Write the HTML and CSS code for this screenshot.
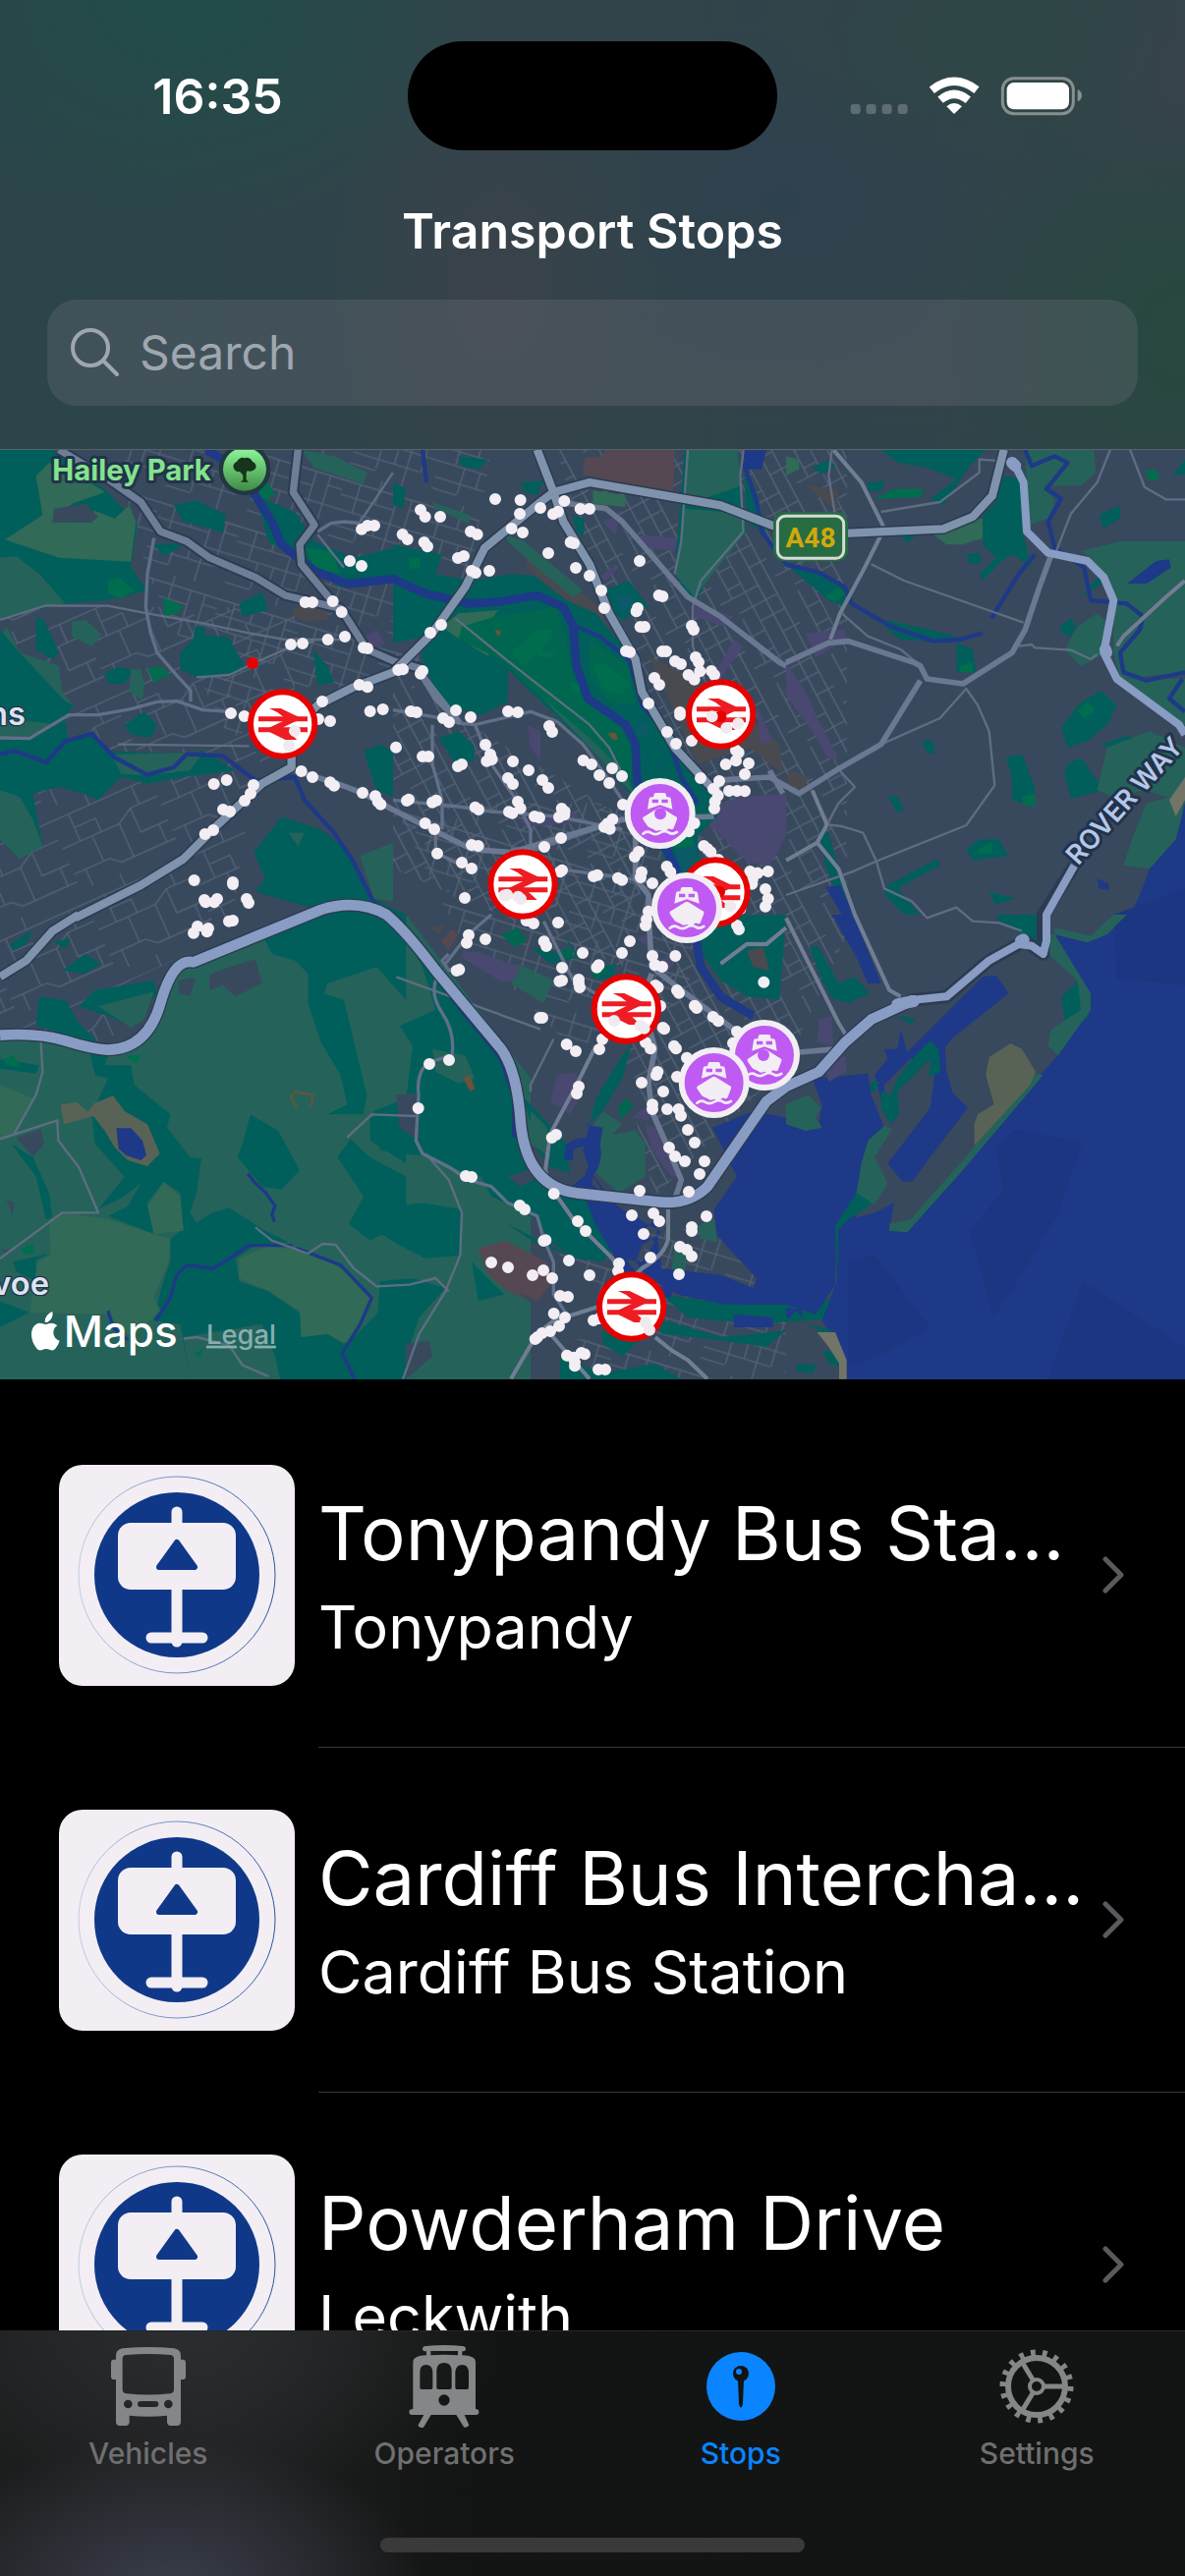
FILE: index.html
```
<!DOCTYPE html>
<html lang="en">
<head>
<meta charset="utf-8">
<meta name="viewport" content="width=device-width">
<title>Transport Stops</title>
<link rel="stylesheet" href="styles.css">
</head>
<body>
<div class="app">
<header class="header">
  <div class="status">
    <div class="status-time">16:35</div>
    <div class="island"></div>
    <svg class="status-icons" viewBox="0 0 720 120" aria-hidden="true">
      <g class="dim"><rect x="2" y="84" width="30" height="30" rx="9"/><rect x="50" y="84" width="30" height="30" rx="9"/><rect x="98" y="84" width="30" height="30" rx="9"/><rect x="146" y="84" width="30" height="30" rx="9"/></g>
      <g class="wifi"><path d="M250 41Q318-12 387 41"/><path d="M276 71Q318 36 361 71"/></g>
      <path class="white" d="M318 114L295 91Q318 71 342 91Z"/>
      <rect class="battery" x="466" y="5" width="216" height="108" rx="34"/>
      <rect class="white" x="479" y="18" width="190" height="82" rx="22"/>
      <path class="nub" d="M695 40Q708 44 708 58T695 76Z"/>
    </svg>
  </div>
  <h1 class="title">Transport Stops</h1>
  <label class="search">
    <svg class="search-icon" viewBox="0 0 50 50" aria-hidden="true"><circle cx="20" cy="20" r="18"/><path d="M33 33L47 47"/></svg>
    <input class="search-input" type="search" placeholder="Search" aria-label="Search">
  </label>
</header>

<section class="map" aria-label="Map of stops">
<svg class="map-art" viewBox="0 21 3618 2837" preserveAspectRatio="xMidYMid slice">
  <defs>
    <pattern id="st1" width="330" height="270" patternUnits="userSpaceOnUse" patternTransform="rotate(-24)">
      <path class="lane" d="M0 40H330M0 130H190L240 100H330M0 215H120L150 240H330M60 40V130M130 0V40M190 130V240M270 40V100M240 100V180H330M40 215V270M100 130V215M300 180V240M60 85H130V130"/>
    </pattern>
    <pattern id="st2" width="260" height="230" patternUnits="userSpaceOnUse" patternTransform="rotate(17)">
      <path class="lane" d="M0 30H260M0 75H170M0 120H260M0 170H210M50 30V120M110 0V75M170 30V230M215 30V170M80 120V200M0 205H80M260 60H215M130 120V170"/>
    </pattern>
    <pattern id="st3" width="220" height="190" patternUnits="userSpaceOnUse" patternTransform="rotate(62)">
      <path class="lane" d="M0 20H220M0 60H220M0 105H220M0 150H150M30 20V105M90 0V60M150 60V190M200 20V150M60 105V150M120 105V150"/>
    </pattern>
    <linearGradient id="parkfill" x1="0" y1="0" x2="0" y2="1"><stop offset="0" stop-color="#8dfa98"/><stop offset="1" stop-color="#3f8a46"/></linearGradient>
    <g id="rail">
      <circle r="98" class="rail-disc"/>
      <path class="rail-mark" d="M-74-16H76M-74 17H76"/>
      <path class="rail-arrow" d="M-41-48H-6L58-17L2 10L44 48H8L-54 17L12-14L-16-36Z"/>
    </g>
    <g id="ferry">
      <circle r="99" class="ferry-disc"/>
      <path class="ferry-mark" fill-rule="evenodd" d="M-38-13L-33-46Q-31-50-24-50H-20L-18-59Q-17-63-12-63H12Q17-63 18-59L20-50H24Q31-50 33-46L38-13L4-25Q0-27-4-25ZM-24-43V-32H-5V-43ZM5-43V-32H24V-43Z"/>
      <path class="ferry-mark" d="M-52 18Q-54 11-46 8L-5-17Q0-20 5-17L46 8Q54 11 52 18L42 44Q38 52 28 46L16 53Q8 56 0 50Q-12 57-20 48Q-30 45-37 40Z"/>
      <path class="ferry-wave" d="M-52 62Q-40 52-28 59Q-14 68 0 59Q14 50 28 59Q38 66 52 57"/>
    </g>
  </defs>

  <rect x="0" y="0" width="3618" height="2900" class="land"/>
  <!-- residential street grids -->
  <path fill="url(#st1)" d="M0 500H900V1000H0ZM0 1000H780L700 1500L400 1640L330 1860L0 1830Z"/>
  <path fill="url(#st2)" d="M380 20H1500L1420 500L1250 700L700 900L400 300ZM1200 1100H2150L2100 1700L1750 1850L1400 1500ZM1700 2400H2400V2858H1750Z"/>
  <path fill="url(#st3)" d="M1700 20H2586V1500L2400 1900L2000 2300L1900 1900L2130 1150L1780 300ZM1200 700L1500 900L2000 1200L1900 1600L1200 1300Z"/>

  <!-- commercial and industrial areas -->
  <g transform="translate(1200 0)">
    <path class="brick" d="M650 21H860L855 150L700 125L580 95L585 45L640 40Z"/>
    <path class="soil" d="M400 330L520 420L620 490L680 610L640 540L560 500L480 440L410 380ZM780 650L990 760L1180 920L1190 1010L1090 930L930 980L850 800ZM50 480L150 520L130 560L60 530Z"/>
    <path class="shop" d="M740 280L870 290L860 330L780 320ZM640 240L690 220L680 280ZM630 410L680 370L690 380L650 420ZM920 490L1040 530L1010 560L920 530ZM1040 600L1070 620L1000 720L990 690ZM410 860L450 880V970L420 930ZM980 1110L1060 1080L1200 1070V1200L1150 1290L1080 1280L960 1160ZM390 1150L560 1130L570 1160L400 1170ZM1110 800L1160 910L1120 920Z"/>
  </g>
  <g transform="translate(2400 0)">
    <path class="shop" d="M0 670L60 760L100 850L160 960L130 965L80 880L0 770ZM60 580L180 570L185 600L90 655Z"/>
    <path class="soil" d="M60 130L160 140L155 210L120 180ZM10 1000L70 1020L50 1060L0 1040Z"/>
  </g>

  <!-- woodland, parks and fields: north-west -->
  <path class="wood" d="M0 21H160L330 150L420 250L400 380L450 450L330 480L200 490L0 535Z"/>
  <path class="field2" d="M150 60L260 110L320 150L220 185L160 240L280 242L285 205L350 230L395 190L415 240L400 362L180 350L15 295L130 220L110 100Z"/>
  <path class="field" d="M0 350L50 345L120 400L200 490L100 505L0 535ZM20 560L60 640L180 680L190 760L225 800L200 850L90 895L0 900V790L30 760L80 780L70 700L0 600ZM220 545L260 540L310 585L280 620L220 590Z"/>
  <path class="urban" d="M165 200L260 185L300 225L280 242L160 242Z"/>
  <path class="wood" d="M0 570L60 640L200 790L225 800L190 860L0 840ZM110 530L135 540L180 640L160 660L110 630ZM530 190L600 175L690 220L680 275L640 260L560 240ZM595 560L625 560V585L700 595L745 680L700 710L600 715L550 690V640L590 600ZM730 490L800 455L820 510L740 530ZM320 700L360 685L410 690L380 735L330 735ZM470 310L540 305L550 320L500 345ZM380 860L440 820L480 860L460 900L400 890ZM780 160L900 210L960 300L1080 350L1200 320V420L1040 440L900 350L820 300ZM955 630L1000 680L1020 730L970 740ZM1110 940L1160 920L1200 940V1080L1150 1060ZM860 1140L980 1180L1060 1240L1140 1390L1240 1440H1020L780 1370L810 1330L775 1250ZM0 900L90 900L200 850L210 910L280 880L330 940L560 950L620 940L720 1000L560 1020L450 1040L370 1020L300 1090L240 1065L180 1050L100 1070L130 1230L60 1270L0 1210Z"/>
  <path class="park" d="M330 420L365 410L410 450L370 475L330 460ZM450 690L490 680L520 705L470 730ZM500 470L560 500L540 520L500 530ZM930 320L1010 330L1040 400L960 380ZM780 140L820 120L840 160L800 175ZM60 1160L90 1155L100 1190L60 1205Z"/>
  <path class="field" d="M400 690L430 690L440 740L435 785L395 760ZM920 21L1020 40L1120 90L1110 125L960 75ZM340 950L620 945L580 1000L450 1015L370 1010ZM0 1060L60 1080L100 1150L130 1230L60 1270L0 1210ZM880 1190L930 1190L910 1230ZM1100 1260L1200 1220V1400L1140 1390Z"/>
  <path class="soil" d="M900 500L1000 510L1000 540L930 545L890 525Z"/>
  <path class="shop" d="M1110 590L1150 570L1175 610L1140 640Z"/>

  <!-- Bute Park and the centre -->
  <g transform="translate(1200 0)">
    <path class="wood" d="M0 310L150 340L130 400L240 420L360 400L430 405L530 480L620 520L700 620L740 720L780 830L880 930L990 1050L990 1140L930 1200L940 1320L860 1330L740 1090L600 930L420 760L350 690L350 790L270 830L150 800L85 650L110 590L0 610ZM140 900L200 880L245 920L250 970L190 980ZM640 450L720 420L780 500L700 540L650 500ZM890 21H1050L1080 270L1010 340L960 420L920 490L860 400ZM0 120L40 140L30 200L0 190ZM200 40L290 50L260 80L210 70ZM550 220L585 230L580 290L555 260ZM390 120L460 115L440 160L400 150ZM1070 60L1110 150L1140 280L1080 240Z"/>
    <path class="field" d="M345 280L400 300L580 450L550 470L450 390L350 300ZM890 200L1075 215L1070 280L960 420L920 470L860 400ZM895 21H1050L1065 130L890 190ZM420 740L520 800L690 960L740 1080L600 930ZM120 180L235 220L230 245L130 200Z"/>
    <path class="field2" d="M150 560L200 520L320 510L300 540L240 570L300 630L290 650L190 590ZM610 145L710 160V195L610 185Z"/>
    <path class="park2" d="M210 560L310 530L500 500L530 620L560 760L680 850L720 900L740 1040L600 900L400 730L330 660L200 600ZM600 600L720 680L740 800L660 790L600 710Z"/>
    <path class="park" d="M360 640L440 570L490 570L480 600L400 680ZM610 680L640 670L720 730L700 770L640 750ZM540 730L575 735L570 770L540 760ZM50 350L85 350L80 380L50 385ZM440 630L500 640L480 655L440 650Z"/>
    <path class="pond" d="M680 460L730 470L740 520L690 510ZM740 860L780 850V890L745 895ZM860 1200L930 1220L920 1290L870 1310Z"/>
    <path class="park" d="M850 1210L910 1200L920 1230L860 1240Z"/>
    <path class="rust" d="M655 885L680 885L688 905L670 905ZM312 570L330 574L325 588L315 584Z"/>
  </g>

  <!-- east side -->
  <g transform="translate(2400 0)">
    <path class="wood" d="M290 21H610L560 70L480 190L440 170L520 110L430 75L340 60ZM80 75L130 50L150 70L110 95ZM250 120L300 115L290 150L250 145ZM660 100L720 110L725 280L750 380L690 340L660 360L600 420L590 400L640 350L600 310L600 220L640 180ZM955 220L1020 190V230L970 260ZM1218 280L1100 350L980 420L900 470L960 400L1080 350ZM300 540L440 570L520 590L500 610L350 600L310 570ZM520 610L570 630L580 700L520 700ZM835 560L870 535L885 560L870 590L840 580ZM1218 50L1180 100L1218 95ZM840 870L890 800L960 755L1010 800L980 860L920 910L860 930ZM960 920L1050 890L1060 960ZM670 960L720 950L740 1000L760 1050L755 1110L690 1090L690 1020ZM860 980L900 960L970 1060L870 1085L850 1010ZM550 1240L590 1210L650 1210L680 1260L570 1275ZM310 1350L460 1270L470 1290L340 1360L410 1440H360L300 1380ZM415 910L450 910L455 950L430 945ZM310 1075L340 1080L360 1120L340 1130ZM620 1370L700 1390L640 1410ZM0 370L100 400L180 440L180 500L130 480ZM100 1180L130 1190L200 1440H180L120 1290ZM550 340L590 335L600 365L560 370ZM350 285L400 280L370 305Z"/>
    <path class="park" d="M270 170L330 140L420 140L410 165ZM120 470L160 440L180 460L150 485ZM1095 85L1130 80L1140 110L1110 115ZM890 820L920 790L945 815L910 840ZM720 1080L760 1070V1110L725 1105ZM585 1240L630 1220V1250L590 1255ZM530 680L570 670V700L530 700Z"/>
    <path class="field" d="M730 21H940L945 90L900 130L800 130L820 180L800 230L740 250L735 110ZM900 330L1020 300L1218 300V700L1020 720L1000 640L1000 480L930 350ZM850 630L890 560L950 520L990 560L960 650L900 680ZM1020 720L1218 720V860L1130 810ZM950 1060L980 930L1110 880L1218 930V1100L1100 1060L1000 1080ZM1218 1070L1100 1100L1060 1200L1030 1290L1110 1300L1200 1210Z"/>
    <path class="field2" d="M450 280L540 240L600 230V290L540 310L490 310ZM0 40L40 50L40 80L0 100Z"/>
    <path class="sand" d="M1218 1020L1170 1090L1190 1140L1218 1090Z"/>
    <path class="shop" d="M0 680L15 690L20 760L0 740Z"/>
  </g>

  <!-- countryside south-west -->
  <g transform="translate(0 1440)">
    <path class="field" d="M0 380L130 380L330 415L420 390L480 320L550 170L1000 0H1240L1620 500V1440H0Z"/>
    <path class="urban" d="M545 200L600 190L580 250L545 240ZM640 180L780 135L800 210L720 250L680 215L640 230ZM50 680L125 655L135 700L100 740ZM20 870L45 880L38 920ZM0 1020L40 1025L20 1040Z"/>
    <path class="wood" d="M120 250L200 260L240 330L300 390L250 390L180 360L110 340ZM240 280L290 230L470 200L480 240L400 340L330 310ZM190 170L260 120L310 150L260 180ZM30 90L100 45L80 90L40 110ZM160 80L215 75L200 105ZM800 60L1000 0H1240V260L1150 160L1000 210L990 240L1050 260L1120 550L1110 610L1000 610L1060 580L1040 490L980 390L940 270L940 180L900 140L830 120ZM275 425L330 430L320 460L400 460L410 520L520 610L510 650L580 740L615 745L600 850L580 910L600 940L650 910L700 895L800 960L880 1000L780 1010L720 1050L730 1120L820 1150L920 1220L920 1290L1010 1280L1060 1310L1180 1190L1240 1130V1440H860L840 1350L800 1250L560 1290L580 1418L550 1250L470 1240L490 1150L520 1060V990L560 960L550 850L500 815L450 880L470 975L330 920L390 890L430 820L480 780L380 860L300 900L380 800L290 700L280 610L330 500L290 490ZM765 610L850 660L915 780L860 840L800 830L725 740L740 700ZM1070 685L1030 740L1110 860L1065 945L1130 995L1240 940V800L1130 740ZM1130 620L1240 600V760L1130 690ZM35 700L100 740L150 850L160 930L140 930L110 800ZM0 440L120 460L110 485L0 470ZM0 1180L90 1215L0 1260ZM150 1035L110 1055L110 1120L50 1090L40 1060Z"/>
    <path class="field2" d="M0 520L100 560L50 670L0 685ZM150 930L190 910L330 930L470 975L520 990L515 1060L470 1170L490 1210L400 1290L330 1220L90 1215L115 1060L155 1040ZM500 815L550 860L560 965L470 975L450 890ZM730 1050L820 1010L960 1035L1040 1080L1130 1170L1100 1250L1050 1310L1000 1280L920 1290L915 1210L820 1150L730 1110Z"/>
    <path class="field" d="M300 280L470 235L440 320L400 345ZM545 165L660 140L670 170L600 200Z"/>
    <path class="park" d="M10 440L40 430L65 465L20 460ZM380 430L430 430L415 455ZM65 1020L100 1005L105 1035L70 1035ZM590 1340L620 1325L610 1355Z"/>
    <path class="dirt" d="M185 580L235 573L268 603L290 575L345 553L380 600L450 640L488 730L450 768L390 750L350 710L320 660L285 615L195 640Z"/>
    <path class="water" d="M355 652H400L435 690L447 735L430 750L385 735L362 715Z"/>
    <path class="rustline" d="M908 590L888 560L900 540L925 545L955 550L950 585"/>
    <path class="brook" d="M757 790L775 815L812 850L840 890L830 915L838 938M893 1010L760 1010L700 1050L650 1080L570 1070L540 1100L520 1170L475 1240M905 1018L1040 1070L1135 1170L1100 1250L1045 1340L1082 1418M330 1210L345 1260L390 1298"/>
  </g>

  <!-- south: Penarth side and the bay -->
  <g transform="translate(1200 1440)">
    <path class="wood" d="M-40 0L0 20L130 190L340 430L380 500L400 700L480 810L560 860L620 870L690 1000L640 1060L560 1050L480 1000L440 930L300 860L270 800L200 780L120 740L-40 720L-60 600L40 560L60 400L20 340L130 290L90 160L30 60ZM400 560L440 600L530 700L540 790L480 770L440 720ZM420 100L560 130L520 60L570 130L480 150ZM730 390L700 500L640 600L600 640L620 560L700 430ZM620 160L680 150L670 200L610 190ZM820 1160L1040 1190L1400 1170V1230L1100 1250L900 1230ZM800 1230L1000 1290L1200 1270L1140 1320L1000 1300L820 1280ZM640 1270L760 1290L700 1350L640 1310ZM510 1350L640 1400L800 1370L880 1418H510ZM960 0H1200L1180 260L1080 250L1000 200L930 100ZM340 940L560 1050L430 1000Z"/>
    <path class="wood" d="M-60 900L90 880L210 900L205 1040L100 1050L20 1010L-60 960ZM240 1060L340 1160L260 1180ZM-40 1120L60 1110L160 1140L80 1230L40 1350L10 1418H-60Z"/>
    <path class="field" d="M380 150L490 200L460 270L360 210ZM120 410L220 430L250 500L200 515L130 480ZM620 680L740 660L770 700L770 800L690 850L610 780ZM420 600L470 650L480 740L420 700ZM860 1010L900 1020L890 1100L850 1090ZM930 950L980 930L990 1000L940 990ZM640 600L700 640L650 690L600 660Z"/>
    <path class="brick" d="M260 1020L340 995L470 1060L490 1120L440 1190L350 1150L290 1100ZM145 80L180 45L200 60L170 108Z"/>
    <path class="shop" d="M215 110L260 115L390 160L370 200L330 205L210 130ZM500 490L560 480L570 560L540 610L480 570ZM770 640L830 660L830 720L880 800L850 800L790 720ZM730 620L790 570L780 630ZM790 150L850 120L860 150L820 190ZM740 70L780 60L790 110Z"/>
    <path class="park2" d="M330 60L380 40L410 80L370 100ZM510 110L540 100L550 130L520 140ZM600 170L640 150L650 180L620 200ZM690 580L720 560L730 590L690 630Z"/>
    <path class="soil" d="M1080 110L1130 100L1150 170L1100 160ZM110 40L160 30L140 60Z"/>
    <path class="rust" d="M215 500L235 490L250 530L235 540Z"/>
    <path class="urban" d="M10 550L70 545L80 690L20 650ZM40 1310L110 1300L120 1350L40 1418ZM350 800L440 770L430 810L390 830ZM380 1150L480 1240L440 1290L640 1300L620 1150L560 1060L480 1060L490 1120L440 1180Z"/>
  </g>

  <!-- sea and channels -->
  <g transform="translate(2400 1440)">
    <path class="water" d="M1218-340L1190-230L1110-140L1080-60L1050 0L980 60L920 85L820 60L900 200L930 280L830 430L540 750L380 960L315 965L330 880L270 910L200 930L160 960L155 1120L110 1240L185 1360V1418H1218Z"/>
    <path class="water" d="M-225 650L-100 600L100 640L110 580L80 500L250 485L260 550L300 650L240 740L215 850L215 930L155 980L150 1130L90 1220L0 1190L-190 1190L-330 1160L-420 1110L-460 1060L-440 1010L-380 970L-500 900L-620 800L-700 870L-760 800L-600 880L-520 1050L-440 1060L-400 1000L-460 960L-540 860L-600 780L-620 720L-600 640L-620 640L-560 650L-570 720L-600 780L-540 880L-480 970L-440 970L-400 930L-380 1080L-200 1100L-100 1140L-90 1110L-210 980L-220 900L-150 800Z"/>
    <path class="deep" d="M640 710L700 655L905 695L830 915L730 1080L635 1230L560 965L665 840ZM270 1040L440 1260L300 1340L190 1380V1060ZM905 1120L1218 1320V1418H800ZM1000 0L1218 -80V215L1010 195Z"/>
    <path class="water" d="M600 190L640 185L680 240L510 375L485 405L490 480L510 545L555 590L440 740L385 815L355 815L310 760L440 590L460 440L380 440L300 520L300 600L270 490L310 440L300 410L340 410L350 350L370 420ZM140 0H205L290 210L250 210L215 130ZM-160 1220L-40 1230V1260H-160ZM0 1200L50 1205V1235L0 1230Z"/>
    <path class="water" d="M120-85L165-90L230 50L205 60ZM950-110L985-95V-75L955-80ZM1040-1010L1130-1080L1170-1085L1175-1060L1100-1010ZM-135-1418H-60L-75-1360H-120Z"/>
    <path class="wood" d="M385 440L440 385L465 410L472 480L435 495L440 440L340 540L345 610L320 640L290 590L290 540L320 550L340 500ZM260 510L285 510L270 545L258 540ZM840 250L890 205L920 250L925 310L850 375L850 320ZM70 95L100 100L160 210L210 190L255 240L190 270L140 255L110 200ZM215 850L260 870L255 890L190 930L160 960L155 1120L150 950ZM60 1250L150 1270L110 1275ZM0 1240L30 1210L60 1240ZM720 0H800V140L720 60L650 20L640 0ZM110 1330L160 1340L165 1380L130 1370ZM340 310L395 315L380 335ZM30 1370L95 1375L80 1400L35 1395Z"/>
    <path class="field" d="M0 580L70 550L105 590L90 620L110 650L60 660L0 640ZM250 690L300 645L325 655L270 740L310 820L270 885L215 850L230 760ZM800 60L820 60L930 240L930 290L830 430L800 400L810 350L900 290L890 200L800 120ZM785 490L760 485L540 750L380 930L315 945L315 965L370 970L540 780ZM1000 0H1040L980 60L920 85L820 60V40L930 65Z"/>
    <path class="dirt" d="M685 393L720 410L762 480L745 520L575 705L575 640L585 610L635 580L610 490L620 435Z"/>
    <path class="sand" d="M95 1275L150 1275L185 1360V1418H162V1370L130 1320Z"/>
    <path class="shop" d="M120 470L180 430L185 480L130 510ZM100 320L140 310L145 400L95 390Z"/>
  </g>

  <!-- rivers -->
  <path class="river" d="M630 20L680 50L780 160L830 240L860 310L960 390L1060 430L1200 415L1300 460L1430 490L1520 485L1640 465L1720 500L1750 560L1760 680L1795 780L1910 860L1940 920L1945 1030L1980 1110L2030 1230L2060 1290L2110 1420L2140 1600L2200 1690L2300 1750"/>
  <path class="river thin" d="M0 950L45 940L140 975L200 910L280 888L350 960L450 1013L530 990L570 950L680 955L780 1030L900 1020L930 1090L1020 1190L1080 1280L1140 1400L1230 1490L1400 1720L1530 1880L1570 2000L1570 2120"/>
  <path class="river thin" d="M1760 560L1830 590L1920 660L1960 800L2020 870L2060 960L2080 1020L2130 1100M1290 20L1302 120M2270 60L2310 180L2325 270L2400 370L2500 395L2580 440L2600 490L2720 560L2850 605L2930 600L3000 580M3160 340L3110 400L3027 535"/>
  <path class="river thin" d="M3130 20L3150 70L3220 40L3260 60L3195 140L3240 170L3200 240L3220 320L3310 380L3330 480L3440 490L3490 530L3480 570L3420 640L3430 700L3500 725L3618 700M3610 720L3570 780L3618 820"/>
  <path class="river" d="M1735 2190L1740 2150Q1780 2120 1820 2150Q1830 2190 1800 2230L1790 2280L1830 2380L1900 2500L1950 2560L2050 2600"/>

  <!-- local roads -->
  <path class="minor" d="M0 540L140 496L330 497L450 520L620 550L760 580L870 600L1060 600M780 670L870 630L960 605M600 715L700 708L780 670M40 2115L110 1990L130 1920L125 1830M0 2125L175 2068L178 2130L240 2210L300 2350L190 2350L0 2490M780 2395L830 2435L940 2475L985 2445L1025 2448L1080 2520L1150 2575L1250 2570L1330 2550L1370 2590M1060 2120L1135 2050L1270 2055M560 2735L600 2730L700 2755L740 2815L820 2850M1100 240L1200 90M970 280L1050 380M360 920L760 925M1210 1630L1540 1750L1650 1790M1690 1820L1620 1960L1620 1980M1300 2170L1370 2250L1410 2350L1405 2480L1360 2590L1280 2720L1230 2858M1390 535L1550 665L1800 860L1860 930L1900 1010"/>
  <path class="minor" d="M2690 210L2870 180L2990 90L2990 50L3060 55M3390 20L3350 120L3270 215L3225 330M3450 20L3495 135L3560 172H3618M2660 370L2760 420L3125 548M2570 520L2650 590L2750 630L2810 680M3110 620L3150 615L3160 625L3270 632L3330 660L3350 645M2690 920L2870 840L2950 750L2985 800L3020 880L3037 1045L2950 1167L2680 1275L2600 1310L2400 1380M2525 1165L2570 1170L2635 1190L2675 1275L2700 1360L2785 1400L2830 1450L2920 1418L2970 1460L3050 1465L3120 1490M2555 990L2610 1050L2560 1100L2525 1165M2100 21L2080 300L2060 400M2270 21L2260 100L2270 270L2140 420L2115 500V620L2150 720M2540 21L2530 100L2550 220"/>
  <path class="second" d="M470 290L450 400L445 500L460 580L480 640L540 710L582 755L582 790M0 900L90 902L210 830L300 830L400 812L480 790L540 788L620 815L700 820M970 270L1010 245L1050 240L1100 245M1200 815L1320 835L1400 855L1450 860L1620 820L1700 850L1780 920L1860 1030L1900 1090L1980 1150M1450 860L1500 980L1570 1080L1620 1180L1620 1240M1320 860L1320 980L1350 1090V1180M1200 1090L1400 1110L1500 1125L1700 1140L1900 1180M1560 1240L1640 1240L1900 1150M1330 1180L1330 1250L1450 1310M1700 1300L1850 1320L1980 1340M1660 1460L1720 1580L1750 1640L1850 1700M1360 1590L1430 1500L1500 1440M1370 1560L1350 1580L1370 1610L1410 1590M1335 1630Q1310 1680 1350 1740Q1390 1800 1380 1870L1310 1890Q1270 1920 1278 1990L1270 2130L1290 2170L1370 2210L1430 2250L1500 2270L1550 2320L1640 2360L1660 2430L1690 2500L1690 2600L1730 2660"/>
  <path class="aroad thin" d="M1275 690L1400 850L1330 780ZM1200 1120L1340 1190L1440 1240L1560 1250L1760 1190L1900 1150L2180 1140M880 960L900 1000L1030 1040L1110 1070L1200 1120M1700 180L1850 200L1900 240L2100 470L2200 530L2380 670L2400 680M2400 670L2530 610L2590 605L2790 670L2810 680L2830 720L2940 735L3090 640L3130 570L3170 450L3210 340M2810 725L2690 920L2560 995L2440 1070L2350 1020L2180 1030M2350 1000L2390 1070"/>
  <path class="aroad thin" d="M1940 1200V1330L1980 1380L1980 1440L1990 1600L2080 1670L2240 1790L2340 1830L2440 1860L2560 1850M1990 1620L1960 1700L2000 1850L1980 1950L1990 2040L2030 2130L2080 2250L2060 2310"/>
  <g class="cased"><path d="M1820 1840L1760 1960L1680 2110L1665 2220L1680 2270L1750 2370L1870 2490L1890 2530"/><path d="M2040 2340L2040 2430Q2030 2480 1960 2520L1850 2630L1690 2680L1640 2720L1560 2858M1680 2720L1800 2858M2000 2730L2050 2770L2100 2800L2160 2858"/><path d="M2545 21L2630 120L2700 260L2640 380L2565 520L2535 600M2480 1060L2525 1165L2495 1220L2400 1275M2495 1220L2560 1300L2610 1440L2715 1670L2750 1690M2400 1450L2560 1770L2590 1820M3410 620L3430 590L3560 470L3618 420M2400 1480L2340 1530L2280 1530L2200 1590"/></g>
  <path class="aroad edge" d="M180 20L330 110L430 180L490 270L570 300L640 350L780 410L870 465L1040 505L1120 630L1200 665L1290 690M910 20L895 150L960 250L915 310L920 370L1020 490"/>
  <path class="aroad" d="M180 20L330 110L430 180L490 270L570 300L640 350L780 410L870 465L1040 505L1120 630L1200 665L1290 690M910 20L895 150L960 250L915 310L920 370L1020 490"/>
  <path class="trunk edge" d="M230 1450L430 1350L560 1270L660 1170L800 1040L890 990V880L970 800L1080 745L1200 700L1320 580L1420 440L1480 320L1650 180L1690 150L1640 20M1690 150L1720 240L1800 370L1860 520L1940 660L1960 760L2060 930L2180 1060L2200 1060M1690 150L1800 120L2000 155L2200 190L2380 260L2480 280L2880 262L2970 225L3030 160L3065 20M0 1630L80 1580L160 1490L240 1440"/>
  <path class="trunk" d="M230 1450L430 1350L560 1270L660 1170L800 1040L890 990V880L970 800L1080 745L1200 700L1320 580L1420 440L1480 320L1650 180L1690 150L1640 20M1690 150L1720 240L1800 370L1860 520L1940 660L1960 760L2060 930L2180 1060L2200 1060M1690 150L1800 120L2000 155L2200 190L2380 260L2480 280L2880 262L2970 225L3030 160L3065 20M0 1630L80 1580L160 1490L240 1440"/>
  <path class="motor edge" d="M0 1808Q120 1800 200 1825T330 1853Q450 1850 490 1710T590 1585L980 1425Q1090 1390 1180 1440Q1240 1490 1330 1610L1530 1850Q1580 1920 1590 2080Q1610 2270 1760 2290L2000 2316Q2100 2330 2160 2270L2340 2010L2400 1965L2500 1920L2580 1830L2660 1760L2790 1700L2890 1690L3020 1580L3130 1520L3185 1560V1440L3280 1290"/>
  <path class="motor" d="M0 1808Q120 1800 200 1825T330 1853Q450 1850 490 1710T590 1585L980 1425Q1090 1390 1180 1440Q1240 1490 1330 1610L1530 1850Q1580 1920 1590 2080Q1610 2270 1760 2290L2000 2316Q2100 2330 2160 2270L2340 2010L2400 1965L2500 1920L2580 1830L2660 1760L2790 1700"/>
  <path class="motor narrow" d="M2660 1760L2790 1700L2890 1690L3020 1580L3110 1530L3150 1535L3185 1560L3195 1520V1440L3280 1290M3090 50L3125 120L3135 270L3200 335L3320 360L3370 410L3400 480L3370 640L3410 720L3600 860L3618 890"/>
  <path class="motor knot" d="M2740 1714L2790 1704M3090 60L3100 70M3117 1520L3125 1516M3375 630L3378 640"/>

  <!-- place labels -->
  <text class="lbl park-lbl" x="160" y="115">Hailey Park</text>
  <g transform="translate(747 80)"><circle r="79" class="tree-ring"/><circle r="66" fill="url(#parkfill)"/><path class="tree" d="M-33-2A15 15 0 0 1-24-23A18 18 0 0 1 0-34A18 18 0 0 1 24-23A15 15 0 0 1 33-2Q22 10 8 5L5 10V32L12 39H-12L-5 32V18L-15 7Q-28 9-33-2Z"/></g>
  <text class="lbl town" x="78" y="860" text-anchor="end">ns</text>
  <text class="lbl town" x="150" y="2602" text-anchor="end">voe</text>
  <text class="lbl road-lbl" transform="translate(3292 1292) rotate(-48)">ROVER WAY</text>
  <rect class="shield-o" x="2361" y="211" width="228" height="150" rx="34"/>
  <rect class="shield-i" x="2374" y="223" width="202" height="129" rx="24"/>
  <text class="shield-t" x="2475" y="317" text-anchor="middle">A48</text>

  <!-- bus stops -->
  <path class="stop" d="M1104 263h0M1122 252h0M1143 252h0M1068 360h0M1104 375h0M932 486h0M954 486h0M1016 483h0M1043 516h0M888 615h0M924 612h0M1001 600h0M1053 591h0M1110 625h0M1122 627h0M1097 738h0M1122 745h0M984 789h0M705 825h0M746 834h0M972 843h0M1008 849h0M1130 819h0M1169 813h0M920 1002h0M954 1020h0M1008 1036h0M1020 1046h0M1107 1068h0M1146 1078h0M1154 1095h0M1162 1103h0M653 1041h0M692 1029h0M774 1044h0M765 1070h0M747 1092h0M681 1119h0M702 1125h0M651 1182h0M626 1194h0M593 1335h0M711 1341h0M711 1347h0M624 1395h0M628 1402h0M663 1392h0M654 1402h0M753 1392h0M759 1404h0M603 1476h0M591 1496h0M636 1482h0M632 1492h0M699 1460h0M711 1458h0"/>
  <path class="stop" transform="translate(1200 0)" d="M312 171h0M389 174h0M84 204h0M98 225h0M144 225h0M387 216h0M450 198h0M523 177h0M489 217h0M504 209h0M572 201h0M600 201h0M362 261h0M396 273h0M237 270h0M257 279h0M29 279h0M44 294h0M95 303h0M105 316h0M198 351h0M216 345h0M240 390h0M252 396h0M294 390h0M474 336h0M542 303h0M552 306h0M558 381h0M600 405h0M636 450h0M645 504h0M147 555h0M114 579h0M753 360h0M812 465h0M823 468h0M747 504h0M743 514h0M755 561h0M768 561h0M912 558h0M918 570h0M711 635h0M723 638h0M822 636h0M834 636h0M861 666h0M879 675h0M924 654h0M933 669h0M902 708h0M920 722h0M937 697h0M972 696h0M981 708h0M798 717h0M813 738h0M780 795h0M876 822h0M876 830h0M837 882h0M864 918h0M912 909h0M16 693h0M30 691h0M84 704h0M90 696h0M54 819h0M72 822h0M192 816h0M237 837h0M153 840h0M171 852h0M351 819h0M381 822h0M477 864h0M486 882h0M282 921h0M9 929h0M90 957h0M108 957h0M198 987h0M210 981h0M297 951h0M286 971h0M302 966h0M366 972h0M414 999h0M351 1023h0M366 1041h0M456 1029h0M474 1053h0M581 969h0M606 981h0M630 1014h0M669 993h0M699 1017h0M660 1038h0M702 1104h0M42 1092h0M48 1088h0M120 1097h0M132 1091h0M251 1112h0M261 1119h0M381 1095h0M389 1115h0M354 1126h0M364 1130h0M432 1140h0M447 1144h0M515 1116h0M524 1125h0M507 1142h0M523 1135h0M98 1161h0M126 1179h0M240 1227h0M260 1230h0M135 1253h0M210 1281h0M240 1299h0M219 1389h0M462 1233h0M513 1206h0M510 1309h0M516 1304h0M645 1172h0M655 1162h0M670 1149h0M662 1178h0M612 1323h0M624 1319h0M687 1328h0M699 1334h0M738 1263h0M750 1248h0M759 1310h0M756 1326h0M792 1344h0M836 1293h0M847 1310h0M939 1023h0M996 1032h0M978 1056h0M992 1076h0M983 1095h0M981 1116h0M1026 1062h0M1050 1062h0M1074 1063h0M1074 1011h0M1086 978h0M1016 981h0M1047 970h0M1055 945h0M1047 938h0M900 1162h0M920 1161h0M903 1186h0M949 1230h0M960 1239h0M970 1249h0M993 1272h0M1090 1308h0M1113 1313h0M1145 1308h0M1098 1330h0M1096 1346h0M1137 1362h0M1145 1391h0M1137 1415h0M780 1430h0M1060 1423h0"/>
  <path class="stop" transform="translate(1200 1440)" d="M231 62h0M225 86h0M282 75h0M194 171h0M202 168h0M407 18h0M429 27h0M504 24h0M461 82h0M468 96h0M579 117h0M516 162h0M508 203h0M516 201h0M567 198h0M567 208h0M570 222h0M622 161h0M628 154h0M699 117h0M723 81h0M774 15h0M771 33h0M1050 33h0M1056 45h0M792 126h0M800 154h0M822 159h0M862 126h0M1132 206h0M801 216h0M809 222h0M867 231h0M873 239h0M816 279h0M921 278h0M927 285h0M977 312h0M993 325h0M824 345h0M828 349h0M448 315h0M456 315h0M639 380h0M630 411h0M530 396h0M558 417h0M771 390h0M786 409h0M858 401h0M864 409h0M897 437h0M1050 357h0M1038 392h0M867 495h0M808 480h0M804 490h0M759 513h0M825 540h0M567 525h0M561 546h0M792 580h0M792 594h0M837 594h0M872 594h0M879 614h0M900 657h0M921 696h0M843 711h0M861 738h0M891 753h0M951 753h0M936 792h0M903 846h0M753 843h0M171 444h0M111 456h0M77 591h0M485 681h0M498 672h0M222 798h0M240 801h0M387 888h0M402 900h0M491 852h0M564 936h0M588 966h0M729 918h0M795 912h0M813 936h0M765 975h0M957 921h0M912 954h0M912 966h0M876 1014h0M897 1023h0M912 1043h0M786 1047h0M873 1098h0M460 996h0M466 994h0M537 1056h0M600 1101h0M690 1065h0M687 1088h0M300 1062h0M351 1077h0M426 1101h0M459 1086h0M486 1110h0M510 1164h0M534 1167h0M491 1218h0M525 1230h0M507 1256h0M480 1272h0M455 1278h0M434 1296h0M441 1290h0M612 1239h0M630 1233h0M531 1346h0M552 1352h0M575 1338h0M585 1342h0M555 1367h0M555 1378h0M627 1389h0M648 1389h0"/>
  <circle class="red-dot" cx="771" cy="672" r="18"/>

  <!-- stations and piers -->
  <use href="#rail" x="863" y="858"/>
  <use href="#rail" x="2201" y="828"/>
  <use href="#rail" x="1596" y="1347"/>
  <use href="#rail" x="2184" y="1371"/>
  <use href="#rail" x="1912" y="1728"/>
  <use href="#rail" x="1928" y="2637"/>
  <circle class="red-dot" cx="2196" cy="1370" r="18"/>
  <use href="#ferry" x="2015" y="1131"/>
  <use href="#ferry" x="2097" y="1419"/>
  <use href="#ferry" x="2334" y="1869"/>
  <use href="#ferry" x="2180" y="1953"/>
  <circle class="red-dot" cx="2200" cy="835" r="18"/>
  <circle class="violet-dot" cx="2016" cy="1132" r="18"/>
  <circle class="violet-dot" cx="2331" cy="1869" r="18"/>
  <path class="stop shaded" d="M900 879h0M882 924h0M2174 835h0M2218 870h0M2254 856h0M1540 1381h0M1548 1379h0M1582 1385h0M1590 1392h0M1875 1764h0M1955 1779h0M1967 1787h0M1971 2685h0M1983 2708h0M2230 1414h0"/>

  <!-- Apple Maps mark and legal link -->
  <path class="mark" transform="translate(96 2650)" d="M64 2Q67 18 57 28T41 34Q40 22 48 13T64 2ZM79 45Q67 52 67 67Q68 84 86 91Q82 104 73 115Q66 123 57 119Q45 113 33 119Q24 123 17 116Q0 95 0 72Q0 50 14 41Q23 35 34 39Q44 43 52 39Q68 33 79 45Z"/>
  <text class="maps" x="194" y="2760">Maps</text>
  <a href="#legal"><text class="legal" x="630" y="2750">Legal</text></a>
</svg>
</section>

<svg class="sprite" aria-hidden="true">
  <defs>
    <linearGradient id="ring" x1="0" x2="1"><stop offset="0" stop-color="#c3cbe0"/><stop offset="1" stop-color="#2b53a0"/></linearGradient>
    <symbol id="busstop" viewBox="0 0 240 225">
      <circle cx="120" cy="112" r="100" fill="none" stroke="url(#ring)"/>
      <circle cx="120" cy="112" r="84" fill="#103889"/>
      <path d="M120 48V180M94 176H146" fill="none" stroke="#f2eef4" stroke-width="11" stroke-linecap="round"/>
      <rect x="60" y="59" width="120" height="68" rx="13" fill="#f2eef4"/>
      <path d="M120 79L138 104H102Z" fill="#103889" stroke="#103889" stroke-width="6" stroke-linejoin="round"/>
    </symbol>
  </defs>
</svg>
<main class="stops">
  <a class="row" href="#tonypandy">
    <svg class="thumb"><use href="#busstop"/></svg>
    <div class="row-text"><h2 class="name">Tonypandy Bus Sta…</h2><p class="place">Tonypandy</p></div>
    <svg class="chevron" viewBox="0 0 22 38"><path d="M3 3L19 19L3 35"/></svg>
  </a>
  <a class="row" href="#cardiff">
    <svg class="thumb"><use href="#busstop"/></svg>
    <div class="row-text"><h2 class="name">Cardiff Bus Intercha…</h2><p class="place">Cardiff Bus Station</p></div>
    <svg class="chevron" viewBox="0 0 22 38"><path d="M3 3L19 19L3 35"/></svg>
  </a>
  <a class="row" href="#powderham">
    <svg class="thumb"><use href="#busstop"/></svg>
    <div class="row-text"><h2 class="name">Powderham Drive</h2><p class="place">Leckwith</p></div>
    <svg class="chevron" viewBox="0 0 22 38"><path d="M3 3L19 19L3 35"/></svg>
  </a>
</main>

<footer class="footer">
  <nav class="tabs">
    <a class="tab" href="#vehicles">
      <svg class="tab-icon" viewBox="21 30 264 264"><path fill-rule="evenodd" d="M54 80V68Q54 50 74 46Q152 38 232 46Q252 50 252 68V80H258Q267 80 267 90V131Q267 141 258 141H252V270Q252 282 240 282H222Q210 282 210 270V251Q152 257 95 251V270Q95 282 83 282H66Q54 282 54 270V141H48Q39 141 39 131V90Q39 80 48 80ZM85 66Q74 67 74 78V172Q74 182 85 184Q152 191 220 184Q231 182 231 172V78Q231 67 220 66Q152 60 85 66ZM91 203A13 13 0 1 0 91 229A13 13 0 1 0 91 203ZM214 203A13 13 0 1 0 214 229A13 13 0 1 0 214 203ZM129 207A9 9 0 0 0 129 225H175A9 9 0 0 0 175 207Z"/></svg>
      <span>Vehicles</span>
    </a>
    <a class="tab" href="#operators">
      <svg class="tab-icon" viewBox="923 30 264 264"><path fill-rule="evenodd" d="M998 39Q1055 33 1112 39Q1121 40 1121 48Q1121 55 1110 55V67Q1151 68 1151 88V231Q1161 231 1161 240Q1161 249 1152 249H1117L1131 280Q1128 289 1116 287L1092 249H1015L992 287Q980 290 975 281L993 249H957Q948 249 948 240Q948 231 960 231V88Q960 68 1001 67V55Q989 55 989 48Q989 40 998 39ZM1014 54V67Q1055 64 1097 67V54ZM981 117V166Q981 171 986 171H1015Q1020 171 1020 166V117Q1018 96 1000 96T981 117ZM1032 112V166Q1032 171 1037 171H1073Q1078 171 1078 166V112Q1076 90 1055 90T1032 112ZM1089 117V166Q1089 171 1094 171H1125Q1130 171 1130 166V117Q1128 96 1110 96T1089 117ZM1055 187A17 17 0 1 0 1055 221A17 17 0 1 0 1055 187Z"/></svg>
      <span>Operators</span>
    </a>
    <a class="tab active" href="#stops" aria-current="page">
      <svg class="tab-icon" viewBox="0 0 88 88"><circle cx="44" cy="44" r="35"/><circle cx="44" cy="31" r="8" fill="#121413"/><path fill="#121413" d="M41 37H47L46 62Q44 69 42 62Z"/><circle cx="42" cy="29" r="3"/></svg>
      <span>Stops</span>
    </a>
    <a class="tab" href="#settings">
      <svg class="tab-icon gear" viewBox="0 0 88 88"><circle cx="44" cy="44" r="29" stroke-width="6"/><circle class="teeth" cx="44" cy="44" r="34" stroke-width="7" pathLength="180"/><circle cx="44" cy="44" r="7" stroke-width="4"/><path d="M52 44H72M40 37L29 19M40 51L29 69" stroke-width="5"/></svg>
      <span>Settings</span>
    </a>
  </nav>
  <div class="home"></div>
</footer>
</div>
</body>
</html>
```
FILE: styles.css
```
* { box-sizing: border-box; }
body { margin: 0; background: #000; color: #fff; font-family: Inter, "Liberation Sans", sans-serif; }
a { color: inherit; text-decoration: none; }
h1, h2, p { margin: 0; font-weight: 400; }
.app { display: flex; flex-direction: column; height: 100vh; overflow: hidden; }

/* header */
.header {
  flex: none; padding: 42px 48px 44px; border-bottom: 1px solid #56636e;
  background:
    radial-gradient(ellipse 26% 50% at 16% 0, #214d48, transparent),
    radial-gradient(ellipse 22% 60% at 100% 75%, #27483f, transparent),
    radial-gradient(ellipse 20% 30% at 84% 8%, #2e4745, transparent),
    radial-gradient(ellipse 14% 60% at 42% 62%, #3a424a, transparent),
    radial-gradient(ellipse 20% 40% at 66% 45%, #2e414e, transparent),
    radial-gradient(ellipse 12% 40% at 100% 18%, #3b424c, transparent),
    linear-gradient(90deg, #2b454a, #31444a 40%, #32434a);
}
.status { display: grid; grid-template-columns: 1fr 376px 1fr; align-items: center; margin: 0 -48px; }
.status-time { padding-left: 28px; text-align: center; font-size: 50px; font-weight: 600; line-height: 60px; }
.island { height: 111px; border-radius: 56px; background: #000; }
.status-icons { width: 240px; height: 40px; margin-left: 74px; }
.status-icons .dim { fill: #fff; opacity: .22; }
.white { fill: #fff; }
.wifi { fill: none; stroke: #fff; stroke-width: 25; }
.battery { fill: none; stroke: #85908f; stroke-width: 9; }
.nub { fill: #85908f; }
.title { margin-top: 52px; text-align: center; font-size: 50px; font-weight: 600; line-height: 60px; }
.search { display: flex; align-items: center; gap: 20px; height: 108px; margin-top: 40px; padding: 0 24px; border-radius: 30px; background: rgba(130, 125, 140, .24); }
.search-icon { width: 50px; height: 50px; fill: none; stroke: #9fa6b0; stroke-width: 4; stroke-linecap: round; }
.search-input { flex: 1; min-width: 0; padding: 0; border: 0; outline: 0; background: none; color: #fff; font: 400 48px/60px Inter, "Liberation Sans", sans-serif; appearance: none; }
.search-input::placeholder { color: #9fa6b0; opacity: 1; }

/* map */
.map { flex: none; }
.map-art { display: block; width: 100%; height: auto; }
.land, .urban { fill: #38495e; }
.wood { fill: #005f5b; }
.park { fill: #006e4e; }
.park2 { fill: #00664f; }
.field { fill: #25635a; }
.field2 { fill: #316a56; }
.soil { fill: #494a50; }
.brick { fill: #554852; }
.shop { fill: #484870; }
.dirt { fill: #596355; }
.sand { fill: #717466; }
.rust { fill: #6b5238; }
.pond { fill: #0b5a68; }
.water { fill: #1e3987; }
.deep { fill: #1d3682; }
.rustline, .brook, .river, .lane, .minor, .second, .aroad, .trunk, .motor, .cased path { fill: none; stroke-linejoin: round; }
.rustline { stroke: #6b5238; stroke-width: 6; }
.brook { stroke: #1e3987; stroke-width: 10; }
.river { stroke: #1e3987; stroke-width: 26; }
.river.thin { stroke-width: 13; }
.lane { stroke: #536174; stroke-width: 4; }
.minor { stroke: #5f6d82; stroke-width: 7; }
.second { stroke: #617088; stroke-width: 10; }
.aroad { stroke: #6f7e97; stroke-width: 22; }
.aroad.thin { stroke: #6a7991; stroke-width: 17; }
.trunk { stroke: #8093ad; stroke-width: 25; }
.motor { stroke: #899cc3; stroke-width: 32; }
.motor.narrow { stroke-width: 24; }
.motor.knot { stroke-width: 36; stroke-linecap: round; }
.aroad.edge, .trunk.edge, .motor.edge { stroke: #2b3b51; stroke-width: 34; }
.motor.edge { stroke-width: 40; }
.cased path { stroke: #6f7e93; stroke-width: 13; filter: drop-shadow(0 0 2px #111c2b); }
.lbl { font-weight: 600; paint-order: stroke; stroke: #21334a; stroke-width: 18; stroke-linejoin: round; }
.park-lbl { font-size: 88px; fill: #84e38c; font-weight: 700; }
.town { font-size: 98px; fill: #dbe3ef; stroke-width: 8; }
.road-lbl { font-size: 82px; fill: #b6c6e8; }
.tree-ring { fill: #21383f; }
.tree { fill: #17351a; }
.shield-o { fill: #276b43; }
.shield-i { fill: #276b43; stroke: #d8dbd8; stroke-width: 9; }
.shield-t { font: 700 84px "Liberation Sans Narrow", Roboto, sans-serif; fill: #d1a80c; }
.stop { fill: none; stroke: #f2eef4; stroke-width: 36; stroke-linecap: round; }
.stop.shaded { stroke: #eeeaef; }
.red-dot { fill: #e60000; }
.violet-dot { fill: #bf5af2; }
.rail-disc { fill: #fff; stroke: #e60000; stroke-width: 18; }
.rail-mark { fill: none; stroke: #ee1c23; stroke-width: 15; }
.rail-arrow { fill: #ee1c23; }
.ferry-disc { fill: #bf5af2; stroke: #f2eef4; stroke-width: 18; }
.ferry-mark { fill: #f2eef4; }
.ferry-wave { fill: none; stroke: #f2eef4; stroke-width: 8; stroke-linecap: round; }
.mark, .maps { fill: #fff; }
.maps { font-size: 132px; font-weight: 500; }
.legal { font-size: 82px; font-weight: 500; fill: #86b0b0; text-decoration: underline; }

/* list */
.sprite { position: absolute; width: 0; height: 0; }
.stops { flex: 1; min-height: 0; overflow: hidden; padding-top: 24px; }
.row { position: relative; display: flex; align-items: center; height: 351px; padding: 0 62px 0 60px; }
.row::after { content: ""; position: absolute; left: 324px; right: 0; bottom: 0; height: 1px; background: #38383a; }
.thumb { flex: none; width: 240px; height: 225px; border-radius: 24px; background: #f2eef4; }
.row-text { flex: 1; min-width: 0; margin-left: 24px; white-space: nowrap; }
.name { font-size: 76px; line-height: 100px; }
.place { font-size: 61px; line-height: 80px; margin-top: 6px; }
.chevron { flex: none; width: 22px; height: 38px; fill: none; stroke: #5a5a5e; stroke-width: 5; stroke-linecap: round; stroke-linejoin: round; }

/* tab bar */
.footer {
  flex: none; height: 250px; padding: 12px 0 24px; border-top: 1px solid #262827;
  display: flex; flex-direction: column; justify-content: space-between; align-items: center;
  background:
    radial-gradient(ellipse 22% 60% at 14% 104%, #393d49, transparent),
    radial-gradient(ellipse 26% 70% at 16% 0, #2c2d2f, transparent),
    linear-gradient(90deg, #1b1c1c, #202122 18%, #131514 38%, #121413);
}
.tabs { display: grid; grid-template-columns: repeat(4, 1fr); width: 100%; }
.tab { display: flex; flex-direction: column; align-items: center; gap: 6px; color: #6f6f70; font-size: 30px; font-weight: 500; line-height: 36px; }
.tab-icon { width: 88px; height: 88px; fill: #858687; }
.gear { fill: none; stroke: #858687; }
.teeth { stroke-dasharray: 4 6; }
.active { color: #0a84ff; }
.active .tab-icon { fill: #0a84ff; }
.home { width: 432px; height: 15px; border-radius: 8px; background: #3a3a3a; }
```
